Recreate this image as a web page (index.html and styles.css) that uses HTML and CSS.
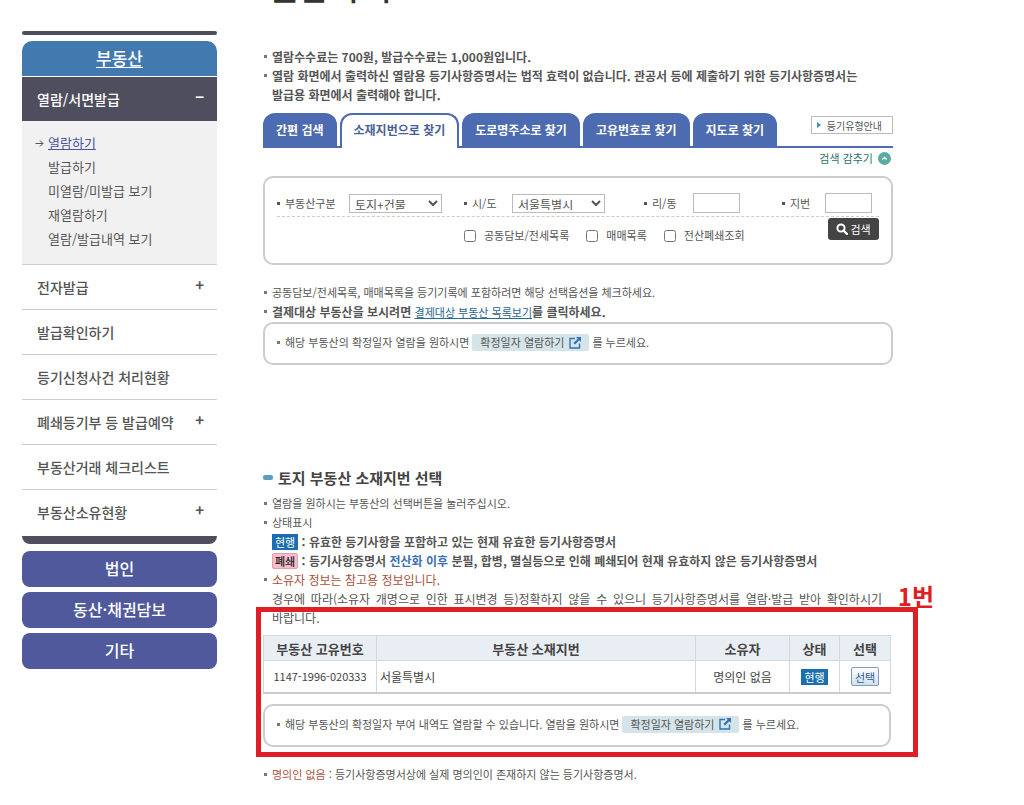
FILE: index.html
```html
<!DOCTYPE html>
<html lang="ko">
<head>
    <meta charset="UTF-8">
    <meta name="viewport" content="width=device-width, initial-scale=1.0">
    <title>열람하기</title>
    <link rel="stylesheet" href="styles.css">
</head>
<body>
    <div class="page">
        <nav class="sidebar">
            <div class="sidebar-top"></div>
            <a class="sidebar-title" href="#">부동산</a>
            <a class="menu-current" href="#">열람/서면발급 <span class="menu-sign">−</span></a>
            <ul class="submenu">
                <li class="active">
                    <svg class="arrow" viewBox="0 0 9 9" width="9" height="9"><path d="M0.5 4.5H8M5 1.5L8 4.5L5 7.5" fill="none" stroke="currentColor"/></svg>
                    <a href="#">열람하기</a>
                </li>
                <li><a href="#">발급하기</a></li>
                <li><a href="#">미열람/미발급 보기</a></li>
                <li><a href="#">재열람하기</a></li>
                <li><a href="#">열람/발급내역 보기</a></li>
            </ul>
            <ul class="menu">
                <li><a href="#">전자발급 <span class="menu-sign">+</span></a></li>
                <li><a href="#">발급확인하기</a></li>
                <li><a href="#">등기신청사건 처리현황</a></li>
                <li><a href="#">폐쇄등기부 등 발급예약 <span class="menu-sign">+</span></a></li>
                <li><a href="#">부동산거래 체크리스트</a></li>
                <li><a href="#">부동산소유현황 <span class="menu-sign">+</span></a></li>
            </ul>
            <div class="sidebar-bottom"></div>
            <div class="category-list">
                <a href="#">법인</a>
                <a href="#">동산·채권담보</a>
                <a href="#">기타</a>
            </div>
        </nav>

        <main class="content">
            <h1>열람하기</h1>

            <ul class="notes notes-intro">
                <li>열람수수료는 700원, 발급수수료는 1,000원입니다.</li>
                <li>열람 화면에서 출력하신 열람용 등기사항증명서는 법적 효력이 없습니다. 관공서 등에 제출하기 위한 등기사항증명서는<br>발급용 화면에서 출력해야 합니다.</li>
            </ul>

            <div class="tab-bar">
                <div class="tabs">
                    <button class="tab" type="button">간편 검색</button>
                    <button class="tab active" type="button">소재지번으로 찾기</button>
                    <button class="tab" type="button">도로명주소로 찾기</button>
                    <button class="tab" type="button">고유번호로 찾기</button>
                    <button class="tab" type="button">지도로 찾기</button>
                </div>
                <button class="guide-button" type="button">
                    <svg viewBox="0 0 4 6" width="4" height="6"><path d="M0 0L4 3L0 6Z" fill="#3c8fb8"/></svg>
                    등기유형안내
                </button>
            </div>
            <button class="toggle-search" type="button">
                검색 감추기
                <svg viewBox="0 0 13 13" width="13" height="13"><circle cx="6.5" cy="6.5" r="6.5" fill="#5cab9f"/><path d="M4.3 7.5L6.5 5.3L8.7 7.5" fill="none" stroke="#fff" stroke-width="1.3"/></svg>
            </button>

            <form class="search-box">
                <div class="search-fields">
                    <label for="kind">부동산구분</label>
                    <select id="kind"><option>토지+건물</option></select>
                    <label for="city">시/도</label>
                    <select id="city"><option>서울특별시</option></select>
                    <label for="dong">리/동</label>
                    <input type="text" id="dong">
                    <label for="lot">지번</label>
                    <input type="text" id="lot">
                </div>
                <div class="search-options">
                    <label><input type="checkbox"> 공동담보/전세목록</label>
                    <label><input type="checkbox"> 매매목록</label>
                    <label><input type="checkbox"> 전산폐쇄조회</label>
                    <button class="search-button" type="button">
                        <svg viewBox="0 0 12 12" width="12" height="12"><circle cx="5" cy="5" r="3.6" fill="none" stroke="#fff" stroke-width="2"/><path d="M7.6 7.6L11 11" stroke="#fff" stroke-width="2.4" stroke-linecap="round"/></svg>
                        검색
                    </button>
                </div>
            </form>

            <ul class="notes notes-search">
                <li>공동담보/전세목록, 매매목록을 등기기록에 포함하려면 해당 선택옵션을 체크하세요.</li>
                <li class="strong">결제대상 부동산을 보시려면 <a href="#">결제대상 부동산 목록보기</a>를 클릭하세요.</li>
            </ul>
            <div class="info-box">
                <p>해당 부동산의 확정일자 열람을 원하시면</p>
                <a class="date-link" href="#">확정일자 열람하기
                    <svg viewBox="0 0 12 12" width="12" height="12"><path d="M6 1.5H1V11H10.5V6.5" fill="none" stroke="#2f73b5" stroke-width="1.4"/><path d="M7 0H12V5L10.3 3.3L6 7.6L4.4 6L8.7 1.7Z" fill="#2f73b5"/></svg>
                </a>
                <span>를 누르세요.</span>
            </div>

            <section class="result">
                <h2>토지 부동산 소재지번 선택</h2>
                <ul class="notes">
                    <li>열람을 원하시는 부동산의 선택버튼을 눌러주십시오.</li>
                    <li>상태표시
                        <div class="legend"><span class="badge">현행</span> : 유효한 등기사항을 포함하고 있는 현재 유효한 등기사항증명서</div>
                        <div class="legend"><span class="badge closed">폐쇄</span> : 등기사항증명서 <span class="blue">전산화 이후</span> 분필, 합병, 멸실등으로 인해 폐쇄되어 현재 유효하지 않은 등기사항증명서</div>
                    </li>
                    <li class="owner-note"><span class="warn">소유자 정보는 참고용 정보입니다.</span><br>경우에 따라(소유자 개명으로 인한 표시변경 등)정확하지 않을 수 있으니 등기사항증명서를 열람·발급 받아 확인하시기 바랍니다.</li>
                </ul>

                <div class="marked">
                    <table class="result-table">
                        <thead>
                            <tr>
                                <th class="col-number">부동산 고유번호</th>
                                <th>부동산 소재지번</th>
                                <th class="col-owner">소유자</th>
                                <th class="col-state">상태</th>
                                <th class="col-select">선택</th>
                            </tr>
                        </thead>
                        <tbody>
                            <tr>
                                <td class="number">1147-1996-020333</td>
                                <td class="address">서울특별시</td>
                                <td>명의인 없음</td>
                                <td><span class="badge">현행</span></td>
                                <td><button class="select-button" type="button">선택</button></td>
                            </tr>
                        </tbody>
                    </table>
                    <div class="info-box">
                        <p>해당 부동산의 확정일자 부여 내역도 열람할 수 있습니다. 열람을 원하시면</p>
                        <a class="date-link" href="#">확정일자 열람하기
                            <svg viewBox="0 0 12 12" width="12" height="12"><path d="M6 1.5H1V11H10.5V6.5" fill="none" stroke="#2f73b5" stroke-width="1.4"/><path d="M7 0H12V5L10.3 3.3L6 7.6L4.4 6L8.7 1.7Z" fill="#2f73b5"/></svg>
                        </a>
                        <span>를 누르세요.</span>
                    </div>
                    <div class="mark-frame"></div>
                    <strong class="mark-label">1번</strong>
                </div>

                <ul class="notes">
                    <li><span class="warn">명의인 없음</span> : 등기사항증명서상에 실제 명의인이 존재하지 않는 등기사항증명서.</li>
                </ul>
            </section>
        </main>
    </div>
</body>
</html>
```
FILE: styles.css
```css
* {
    box-sizing: border-box;
}

body {
    margin: 0;
    background: #fff;
    color: #555;
    font-family: "Noto Sans CJK KR", sans-serif;
    font-size: 11px;
    line-height: 19px;
}

ul {
    list-style: none;
    margin: 0;
    padding: 0;
}

a {
    color: inherit;
}

button,
input,
select {
    font-family: inherit;
    color: inherit;
}

button {
    cursor: pointer;
}

.page {
    display: flex;
    gap: 46px;
    padding: 0 131px 0 22px;
}

/* sidebar */

.sidebar {
    flex: 0 0 195px;
    padding-top: 31px;
}

.sidebar a {
    text-decoration: none;
}

.sidebar-top {
    height: 4px;
    border-radius: 2px;
    background: #4f4e5e;
    margin-bottom: 6px;
}

.sidebar .sidebar-title {
    display: block;
    height: 35px;
    line-height: 34px;
    margin-bottom: 1px;
    border-radius: 10px 10px 0 0;
    background: #427aaf;
    color: #fff;
    font-size: 17px;
    font-weight: 500;
    text-align: center;
    text-decoration: underline;
    text-underline-offset: 2px;
}

.menu-current,
.menu a {
    display: flex;
    justify-content: space-between;
    align-items: center;
    height: 44px;
    padding: 0 13px 0 15px;
    font-size: 14px;
    font-weight: 500;
}

.menu-current {
    background: #4f4e5e;
    color: #fff;
}

.menu-sign {
    font-size: 15px;
    font-weight: 700;
    padding-bottom: 6px;
}

.submenu {
    padding: 10px 0 13px 26px;
    background: #f1f1f1;
    border-bottom: 1px solid #ccc;
    font-size: 13px;
    line-height: 24px;
}

.submenu li {
    position: relative;
}

.submenu .active a {
    color: #49539a;
    text-decoration: underline;
}

.arrow {
    position: absolute;
    left: -13px;
    top: 8px;
}

.menu {
    padding-bottom: 2px;
}

.menu li {
    border-bottom: 1px solid #ccc;
}

.menu li:last-child {
    border-bottom: 0;
}

.sidebar-bottom {
    height: 8px;
    border-radius: 0 0 10px 10px;
    background: #4f4e5e;
    margin-bottom: 7px;
}

.category-list {
    display: grid;
    gap: 5px;
}

.category-list a {
    height: 36px;
    line-height: 35px;
    border-radius: 8px;
    background: #50599c;
    color: #fff;
    font-size: 16px;
    font-weight: 500;
    text-align: center;
}

/* content */

.content {
    flex: 1;
    min-width: 0;
}

h1 {
    margin: -34px 0 41px 4px;
    color: #333;
    font-size: 34px;
    font-weight: 500;
    line-height: 40px;
}

.notes li {
    position: relative;
    padding-left: 9px;
}

.notes li::before {
    content: "";
    position: absolute;
    left: 1px;
    top: 8px;
    width: 3px;
    height: 3px;
    background: #777;
}

.notes-intro {
    font-size: 12px;
    font-weight: 700;
    margin-bottom: 9px;
}

.tab-bar {
    display: flex;
    justify-content: space-between;
    align-items: flex-start;
    border-bottom: 2px solid #4c6bb0;
}

.tabs {
    display: flex;
    gap: 3px;
    margin-bottom: -2px;
}

.tab {
    height: 35px;
    padding: 0 13px 2px;
    border: 0;
    border-radius: 12px 12px 0 0;
    background: #4c6bb0;
    color: #fff;
    font-size: 12px;
    font-weight: 700;
    white-space: nowrap;
}

.tab.active {
    padding: 0 12px 4px;
    border: 2px solid #4c6bb0;
    border-bottom: 0;
    background: #fff;
    color: #4a6099;
}

.guide-button {
    display: flex;
    align-items: center;
    gap: 6px;
    height: 18px;
    margin-top: 3px;
    padding: 0 10px 0 5px;
    border: 1px solid #bbb;
    background: #fff;
    font-size: 10px;
    white-space: nowrap;
}

.toggle-search {
    display: flex;
    align-items: center;
    gap: 5px;
    height: 20px;
    margin: 0 0 8px auto;
    padding: 0 2px 0 0;
    border: 0;
    background: none;
    color: #2c706c;
    font-size: 11px;
}

.search-box {
    padding: 15px 12px 18px;
    border: 2px solid #ccc;
    border-radius: 10px;
    margin-bottom: 18px;
}

.search-fields {
    display: grid;
    grid-template-columns: 72px 115px 48px 132px 49px 89px 43px 1fr;
    align-items: center;
    padding-bottom: 3px;
    border-bottom: 1px dashed #ccc;
}

.search-fields label::before {
    content: "";
    display: inline-block;
    width: 3px;
    height: 3px;
    margin-right: 5px;
    vertical-align: 3px;
    background: #555;
}

.search-fields select {
    width: 93px;
    height: 19px;
    padding: 0 1px 2px;
    border: 1px solid #bbb;
    border-radius: 0;
    background: #fff;
    font-size: 12px;
    line-height: 15px;
}

.search-fields input {
    width: 47px;
    height: 20px;
    border: 1px solid #bbb;
}

.search-options {
    display: flex;
    align-items: flex-start;
    gap: 17px;
    padding-left: 187px;
}

.search-options label {
    display: flex;
    align-items: center;
    gap: 8px;
    padding-top: 9px;
}

.search-options input {
    width: 12px;
    height: 12px;
    margin: 0;
}

.search-button {
    display: flex;
    align-items: center;
    justify-content: center;
    gap: 2px;
    width: 51px;
    height: 22px;
    margin: 1px 0 0 auto;
    padding: 0;
    border: 0;
    border-radius: 3px;
    background: #444;
    color: #fff;
    font-size: 11px;
}

.strong {
    font-size: 12px;
    font-weight: 700;
}

.strong a {
    color: #2a678f;
    font-size: 11px;
    font-weight: 400;
}

.info-box {
    display: flex;
    align-items: center;
    gap: 3px;
    min-height: 43px;
    padding: 0 12px 2px;
    border: 2px solid #ccc;
    border-radius: 10px;
}

.info-box p {
    display: flex;
    align-items: center;
    gap: 5px;
    margin: 0;
}

.info-box p::before {
    content: "";
    width: 3px;
    height: 3px;
    background: #777;
}

.date-link {
    display: flex;
    align-items: center;
    gap: 5px;
    height: 17px;
    padding: 0 8px;
    border-radius: 2px;
    background: #d4e4e9;
    text-decoration: none;
}

.result {
    padding: 102px 2px 0 0;
}

h2 {
    display: flex;
    align-items: center;
    gap: 5px;
    margin: 0 0 6px;
    color: #444;
    font-size: 15px;
    font-weight: 700;
    line-height: 21px;
}

h2::before {
    content: "";
    width: 10px;
    height: 5px;
    border-radius: 2px;
    background: #5c9dc0;
}

.legend {
    font-size: 12px;
    font-weight: 700;
}

.badge {
    display: inline-block;
    padding: 0 2px;
    border: 1px solid #1b6fb0;
    background: #1b6fb0;
    color: #fff;
    font-size: 11px;
    font-weight: 400;
    line-height: 14px;
}

.badge.closed {
    border-color: #e79bb0;
    border-radius: 2px;
    background: #f9bccb;
    color: #222;
    font-weight: 500;
}

.blue {
    color: #3a6fb5;
}

.warn {
    color: #a8513b;
}

.notes .owner-note {
    padding-right: 9px;
    font-size: 12px;
    text-align: justify;
    word-break: keep-all;
}

/* table and note under the red frame */

.marked {
    position: relative;
    padding: 8px 0 18px;
}

.result-table {
    width: 100%;
    margin-bottom: 10px;
    border-collapse: collapse;
    border-bottom: 2px solid #ccc;
    color: #444;
    font-size: 12px;
    text-align: center;
}

.result-table th,
.result-table td {
    padding: 0;
    border: 1px solid #d3d8de;
}

.result-table th {
    height: 25px;
    background: #e9eef4;
    font-size: 13px;
}

.result-table td {
    height: 32px;
}

.result-table .number {
    font-size: 11px;
}

.result-table .address {
    padding-left: 3px;
    text-align: left;
}

.col-number {
    width: 113px;
}

.col-owner {
    width: 94px;
}

.col-state {
    width: 50px;
}

.col-select {
    width: 51px;
}

.select-button {
    height: 19px;
    padding: 0 3px;
    border: 1px solid #7f9db9;
    border-radius: 2px;
    background: linear-gradient(#fff, #cfe0f1);
    color: #2f5f8f;
    font-size: 11px;
    line-height: 16px;
}

.mark-frame {
    position: absolute;
    top: -20px;
    right: -27px;
    bottom: 8px;
    left: -7px;
    border: 5px solid #df1f26;
    pointer-events: none;
}

.mark-label {
    position: absolute;
    top: -46px;
    right: -43px;
    color: #df1f26;
    font-size: 24px;
    line-height: 30px;
}
```
